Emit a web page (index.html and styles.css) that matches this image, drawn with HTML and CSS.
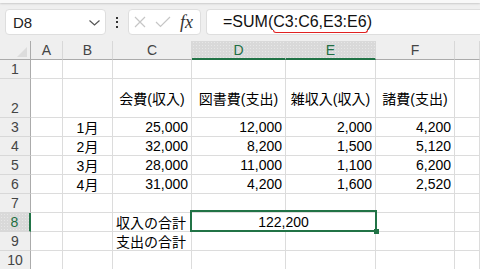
FILE: index.html
```html
<!DOCTYPE html>
<html lang="ja">
<head>
    <meta charset="UTF-8">
    <title>Book1 - Excel</title>
    <link rel="stylesheet" href="styles.css">
</head>
<body>
    <div class="ribbon-edge"></div>

    <div class="formula-bar">
        <div class="name-box">
            <span>D8</span>
            <svg class="chev" width="11" height="6" viewBox="0 0 11 6"><polyline points="0.5,0.5 5.5,5 10.5,0.5" fill="none" stroke="#555" stroke-width="1.2"/></svg>
        </div>
        <div class="kebab"><i></i><i></i><i></i></div>
        <div class="fx-box">
            <svg width="12" height="12" viewBox="0 0 12 12"><path d="M1 1 L11 11 M11 1 L1 11" stroke="#c6c6c6" stroke-width="1.2"/></svg>
            <svg width="16" height="12" viewBox="0 0 16 12"><polyline points="1,6 5.5,10.5 15,1" fill="none" stroke="#c6c6c6" stroke-width="1.2"/></svg>
            <span class="fx">fx</span>
        </div>
        <div class="formula">=SUM(<span class="args">C3:C6,E3:E6</span>)</div>
    </div>

    <div class="sheet">
        <div class="corner"></div>
        <div class="ch">A</div><div class="ch">B</div><div class="ch">C</div>
        <div class="ch sel">D</div><div class="ch sel">E</div><div class="ch">F</div><div class="ch"></div>

        <div class="rh">1</div>
        <div class="c"></div><div class="c"></div><div class="c"></div><div class="c"></div><div class="c"></div><div class="c"></div><div class="c"></div>

        <div class="rh low">2</div>
        <div class="c"></div><div class="c"></div>
        <div class="c m">会費(収入)</div>
        <div class="c m">図書費(支出)</div>
        <div class="c m">雑収入(収入)</div>
        <div class="c m">諸費(支出)</div>
        <div class="c"></div>

        <div class="rh">3</div>
        <div class="c"></div><div class="c m">1月</div>
        <div class="c r">25,000</div><div class="c r">12,000</div><div class="c r">2,000</div><div class="c r">4,200</div>
        <div class="c"></div>

        <div class="rh">4</div>
        <div class="c"></div><div class="c m">2月</div>
        <div class="c r">32,000</div><div class="c r">8,200</div><div class="c r">1,500</div><div class="c r">5,120</div>
        <div class="c"></div>

        <div class="rh">5</div>
        <div class="c"></div><div class="c m">3月</div>
        <div class="c r">28,000</div><div class="c r">11,000</div><div class="c r">1,100</div><div class="c r">6,200</div>
        <div class="c"></div>

        <div class="rh">6</div>
        <div class="c"></div><div class="c m">4月</div>
        <div class="c r">31,000</div><div class="c r">4,200</div><div class="c r">1,600</div><div class="c r">2,520</div>
        <div class="c"></div>

        <div class="rh">7</div>
        <div class="c"></div><div class="c"></div><div class="c"></div><div class="c"></div><div class="c"></div><div class="c"></div><div class="c"></div>

        <div class="rh sel">8</div>
        <div class="c"></div><div class="c"></div>
        <div class="c">収入の合計</div>
        <div class="c m merged active">122,200</div>
        <div class="c"></div><div class="c"></div>

        <div class="rh">9</div>
        <div class="c"></div><div class="c"></div>
        <div class="c">支出の合計</div>
        <div class="c"></div><div class="c"></div><div class="c"></div><div class="c"></div>

        <div class="rh">10</div>
        <div class="c"></div><div class="c"></div><div class="c"></div><div class="c"></div><div class="c"></div><div class="c"></div><div class="c"></div>
    </div>
</body>
</html>
```

FILE: styles.css
```css
body {
    margin: 0;
    width: 480px;
    height: 269px;
    overflow: hidden;
    background: #efefef;
    font-family: "Liberation Sans", "Noto Sans CJK JP", sans-serif;
}

.ribbon-edge {
    height: 3px;
    background: #f8f8f8;
    box-shadow: 0 1px 2px rgba(0, 0, 0, 0.15);
}

/* formula bar */

.formula-bar {
    display: flex;
    align-items: center;
    height: 38px;
    padding: 0 0 0 5px;
    box-sizing: border-box;
}

.name-box,
.fx-box,
.formula {
    height: 26px;
    box-sizing: border-box;
    background: #fff;
    border: 1px solid #dedede;
    border-radius: 4px;
    display: flex;
    align-items: center;
}

.name-box {
    width: 101px;
    padding: 0 5px 0 7px;
    justify-content: space-between;
    font-size: 15px;
    color: #222;
}

.chev {
    margin-top: 1px;
}

.kebab {
    width: 10px;
    margin: 0 6px;
    display: flex;
    flex-direction: column;
    align-items: center;
    gap: 2.5px;
}

.kebab i {
    width: 2px;
    height: 2px;
    background: #333;
}

.fx-box {
    width: 73px;
    padding-left: 5px;
    gap: 10px;
}

.fx-box svg:nth-child(2) {
    margin-left: -1px;
}

.fx {
    font-family: "Liberation Serif", serif;
    font-style: italic;
    font-size: 18px;
    color: #333;
    margin-left: -1px;
}

.formula {
    flex: 1;
    margin-left: 5px;
    padding-left: 16px;
    border-right: none;
    border-radius: 4px 0 0 4px;
    font-size: 16px;
    color: #111;
}

.args {
    position: relative;
}

.args::after {
    content: "";
    position: absolute;
    left: 0;
    right: -1px;
    bottom: -2px;
    height: 2px;
    border: 1px solid #e02020;
    border-top: none;
    border-radius: 0 0 4px 4px;
}

/* sheet grid */

.sheet {
    display: grid;
    grid-template-columns: 31px 32px 50px 79px 94px 90px 79px 1fr;
    grid-template-rows: 19px 19px 39px repeat(8, 19px);
    background: #fff;
}

.c,
.ch,
.rh,
.corner {
    box-sizing: border-box;
    display: flex;
    align-items: center;
    white-space: nowrap;
    font-size: 14px;
}

.c {
    border-right: 1px solid #dcdcdc;
    border-bottom: 1px solid #dcdcdc;
    padding: 0 3px;
    color: #000;
}

.c.r {
    justify-content: flex-end;
}

.c.m {
    justify-content: center;
}

.ch {
    background: #efefef;
    border-right: 1px solid #d8d8d8;
    border-bottom: 1px solid #ababab;
    justify-content: center;
    color: #444;
}

.rh {
    background: #efefef;
    border-right: 1px solid #ababab;
    border-bottom: 1px solid #d8d8d8;
    justify-content: center;
    color: #444;
}

.rh.low {
    align-items: flex-end;
    padding-bottom: 1px;
}

.corner {
    background: #efefef;
    border-right: 1px solid #ababab;
    border-bottom: 1px solid #ababab;
    justify-content: flex-end;
    align-items: flex-end;
    padding: 0 3px 2px 0;
}

.corner::after {
    content: "";
    width: 0;
    height: 0;
    border-left: 10px solid transparent;
    border-bottom: 10px solid #dcdcdc;
}

.ch.sel,
.rh.sel {
    background-color: #d9d9d9;
    background-image: radial-gradient(#e7e7e7 0.7px, transparent 0.9px);
    background-size: 3px 3px;
    color: #1f6f43;
}

.ch.sel {
    border-bottom: 2px solid #217346;
    padding-top: 1px;
}

.rh.sel {
    border-right: 2px solid #217346;
}

.merged {
    grid-column: span 2;
}

.active {
    position: relative;
}

.active::after {
    content: "";
    position: absolute;
    top: -3px;
    left: -2px;
    right: -2px;
    bottom: -1px;
    border: 2px solid #217346;
}

.active::before {
    content: "";
    position: absolute;
    right: -4px;
    bottom: -3px;
    width: 5px;
    height: 5px;
    background: #217346;
    z-index: 1;
}
```
